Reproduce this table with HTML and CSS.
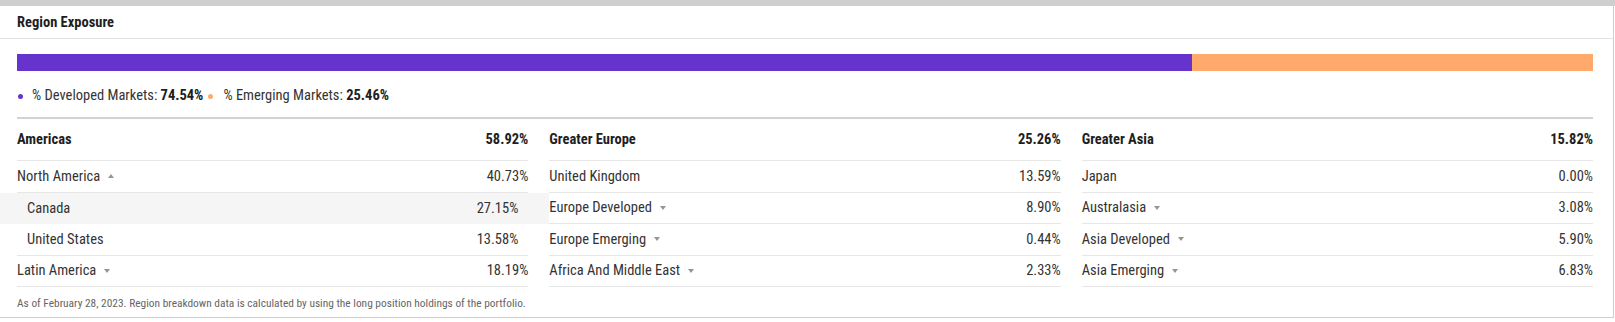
FILE: index.html
```html
<!DOCTYPE html>
<html lang="en">
<head>
<meta charset="utf-8">
<title>Region Exposure</title>
<link rel="stylesheet" href="styles.css">
</head>
<body>
<div class="topbar"></div>
<section class="card">
  <header class="card-head">Region Exposure</header>
  <div class="card-body">
    <div class="split-bar">
      <div class="seg seg-dev" style="width:74.54%"></div>
      <div class="seg seg-emg" style="width:25.46%"></div>
    </div>
    <div class="legend">
      <span class="dot dot-dev"></span><span class="legend-item">% Developed Markets: <b>74.54%</b></span>
      <span class="dot dot-emg"></span><span class="legend-item">% Emerging Markets: <b>25.46%</b></span>
    </div>
    <div class="regions">
      <div class="col">
        <div class="row row-head"><span>Americas</span><span>58.92%</span></div>
        <div class="row"><span class="lbl">North America<i class="caret up"></i></span><span>40.73%</span></div>
        <div class="row sub hl"><span>Canada</span><span>27.15%</span></div>
        <div class="row sub"><span>United States</span><span>13.58%</span></div>
        <div class="row"><span class="lbl">Latin America<i class="caret"></i></span><span>18.19%</span></div>
      </div>
      <div class="col">
        <div class="row row-head"><span>Greater Europe</span><span>25.26%</span></div>
        <div class="row"><span class="lbl">United Kingdom</span><span>13.59%</span></div>
        <div class="row"><span class="lbl">Europe Developed<i class="caret"></i></span><span>8.90%</span></div>
        <div class="row"><span class="lbl">Europe Emerging<i class="caret"></i></span><span>0.44%</span></div>
        <div class="row"><span class="lbl">Africa And Middle East<i class="caret"></i></span><span>2.33%</span></div>
      </div>
      <div class="col">
        <div class="row row-head"><span>Greater Asia</span><span>15.82%</span></div>
        <div class="row"><span class="lbl">Japan</span><span>0.00%</span></div>
        <div class="row"><span class="lbl">Australasia<i class="caret"></i></span><span>3.08%</span></div>
        <div class="row"><span class="lbl">Asia Developed<i class="caret"></i></span><span>5.90%</span></div>
        <div class="row"><span class="lbl">Asia Emerging<i class="caret"></i></span><span>6.83%</span></div>
      </div>
    </div>
    <p class="note">As of February 28, 2023. Region breakdown data is calculated by using the long position holdings of the portfolio.</p>
  </div>
</section>
</body>
</html>
```

FILE: styles.css
```css
* { box-sizing: border-box; }
html, body { margin: 0; padding: 0; background: #fff; }
body {
  font-family: Roboto, "Liberation Sans", Arial, sans-serif;
  font-size: 14.5px;
  font-stretch: 87.5%;
  color: #333;
  width: 1615px;
}
.topbar { height: 6px; background: #cfcfcf; }
.card {
  width: 1614px;
  border-right: 1px solid #cfcfcf;
  border-bottom: 1px solid #cfcfcf;
}
.card-head {
  height: 33px;
  display: flex;
  align-items: center;
  padding: 0 17px;
  font-weight: 700;
  color: #1e1e1e;
  border-bottom: 1px solid #e3e3e3;
}
.card-body { padding: 15px 20px 7px 17px; }
.split-bar { display: flex; height: 17px; }
.seg { height: 100%; }
.seg-dev { background: #6633cc; }
.seg-emg { background: #ffa96d; }
.legend {
  display: flex;
  align-items: center;
  height: 16px;
  margin-top: 17px;
  padding-bottom: 13px;
  box-sizing: content-box;
  border-bottom: 2px solid #d2d2d2;
  color: #333;
  line-height: 16px;
}
.legend b { color: #1e1e1e; }
.dot { width: 5px; height: 5px; border-radius: 50%; margin-right: 9px; }
.dot-dev { background: #6633cc; margin-left: 1px; }
.dot-emg { background: #ffa96d; margin-left: 5px; margin-right: 10px; }
.regions {
  display: grid;
  grid-template-columns: repeat(3, 1fr);
  column-gap: 21px;
}
.row {
  display: flex;
  align-items: center;
  justify-content: space-between;
  height: 31.5px;
  border-bottom: 1px solid #e6e6e6;
  color: #333;
}
.row-head {
  height: 42px;
  font-weight: 700;
  color: #1e1e1e;
}
.row.sub { padding: 0 10px; border-bottom: none; }
.row.sub + .row.sub { border-bottom: 1px solid #e6e6e6; }
.row.hl {
  background: #f5f5f5;
  margin: 0 -21px 0 -17px;
  padding: 0 31px 0 27px;
}
.lbl { display: inline-flex; align-items: center; }
.caret {
  display: inline-block;
  width: 0;
  height: 0;
  margin-left: 8px;
  border-left: 3px solid transparent;
  border-right: 3px solid transparent;
  border-top: 4px solid #959595;
}
.caret.up {
  border-left-width: 3.5px;
  border-right-width: 3.5px;
  border-top: none;
  border-bottom: 4px solid #959595;
}
.note {
  margin: 9px 0 0;
  font-size: 11.4px;
  line-height: 14px;
  color: #666;
}
```
